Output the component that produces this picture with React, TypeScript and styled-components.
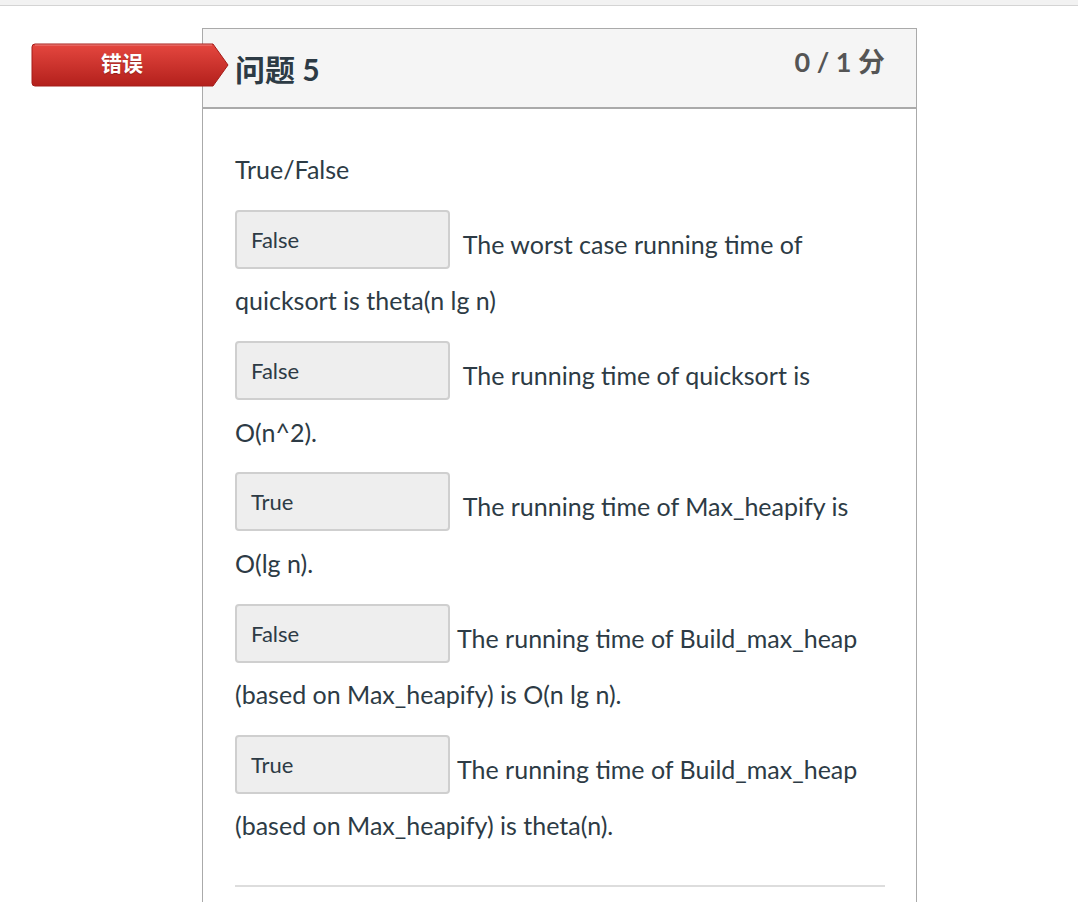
import React from "react";
import styled, { createGlobalStyle } from "styled-components";

const Global = createGlobalStyle`
  html, body { margin: 0; padding: 0; background: #fff; }
  body { font-family: Lato, "Noto Sans CJK SC", sans-serif; color: #2d3b45; }
`;

const TopStrip = styled.div`
  height: 5px;
  background: #f2f2f2;
  border-bottom: 1px solid #d4d4d4;
`;

const Page = styled.div`
  padding: 22px 0 0 202px;
`;

const Card = styled.section`
  position: relative;
  width: 713px;
  border: 1px solid #aaaaaa;
  border-bottom: none;
  background: #fff;
`;

const Header = styled.header`
  display: flex;
  justify-content: space-between;
  align-items: flex-start;
  height: 78px;
  padding: 0 31px 0 32px;
  background: #f5f5f5;
  border-bottom: 2px solid #aaaaaa;
`;

const Title = styled.h2`
  margin: 18px 0 0;
  font-family: Lato, "Noto Sans CJK SC", sans-serif;
  font-size: 30px;
  font-weight: 700;
  line-height: 44px;
  color: #2d3b45;
`;

const Points = styled.div`
  margin-top: 15px;
  font-family: Lato, "Noto Sans CJK SC", sans-serif;
  font-size: 27px;
  font-weight: 700;
  line-height: 36px;
  color: #555555;
`;

const Badge = styled.div`
  position: absolute;
  left: -172px;
  top: 14px;
  width: 198px;
  height: 44px;
  display: flex;
  align-items: center;
  justify-content: center;
  padding: 0 16px 6px 0;
  box-sizing: border-box;
`;

const BadgeShape = styled.svg`
  position: absolute;
  inset: 0;
  width: 100%;
  height: 100%;
`;

const BadgeText = styled.span`
  position: relative;
  font-family: "Noto Sans CJK SC", sans-serif;
  font-size: 21px;
  font-weight: 700;
  color: #fff;
  text-shadow: 0 1px 1px rgba(0, 0, 0, 0.25);
`;

const Body = styled.div`
  padding: 42px 31px 80px 32px;
`;

const Para = styled.p`
  margin: 0 0 21.25px;
  font-size: 25px;
  line-height: 37.5px;
`;

const Answer = styled.span`
  display: inline-flex;
  align-items: center;
  box-sizing: border-box;
  width: 215px;
  height: 59px;
  margin: 0 7px 13.5px 0;
  padding: 0 14px;
  vertical-align: 6px;
  background: #eeeeee;
  border: 2px solid #cfcfcf;
  border-radius: 4px;
  font-size: 22px;
  line-height: normal;
  color: #2d3b45;
`;

const Divider = styled.hr`
  margin: 40px 0 0;
  border: none;
  height: 2px;
  background: #dddddd;
`;

const items: { answer: string; space: boolean; text: string }[] = [
  { answer: "False", space: true, text: "The worst case running time of quicksort is theta(n lg n)" },
  { answer: "False", space: true, text: "The running time of quicksort is O(n^2)." },
  { answer: "True", space: true, text: "The running time of Max_heapify is O(lg n)." },
  { answer: "False", space: false, text: "The running time of Build_max_heap (based on Max_heapify) is O(n lg n)." },
  { answer: "True", space: false, text: "The running time of Build_max_heap (based on Max_heapify) is theta(n)." },
];

export default function App() {
  return (
    <>
      <Global />
      <TopStrip />
      <Page>
        <Card>
          <Badge>
            <BadgeShape viewBox="0 0 198 44" preserveAspectRatio="none">
              <defs>
                <linearGradient id="bg" x1="0" y1="0" x2="0" y2="1">
                  <stop offset="0" stopColor="#e5473f" />
                  <stop offset="1" stopColor="#b3201c" />
                </linearGradient>
              </defs>
              <path d="M4 1 H182 L197 22 L182 43 H4 Q1 43 1 40 V4 Q1 1 4 1 Z" fill="url(#bg)" stroke="#a51c18" strokeWidth="1" />
              <path d="M4 2 H181" stroke="rgba(255,255,255,0.35)" strokeWidth="1" />
            </BadgeShape>
            <BadgeText>错误</BadgeText>
          </Badge>
          <Header>
            <Title>问题 5</Title>
            <Points>0 / 1 分</Points>
          </Header>
          <Body>
            <Para>True/False</Para>
            {items.map((it, i) => (
              <Para key={i}>
                <Answer>{it.answer}</Answer>
                {it.space ? " " : ""}
                {it.text}
              </Para>
            ))}
            <Divider />
          </Body>
        </Card>
      </Page>
    </>
  );
}
